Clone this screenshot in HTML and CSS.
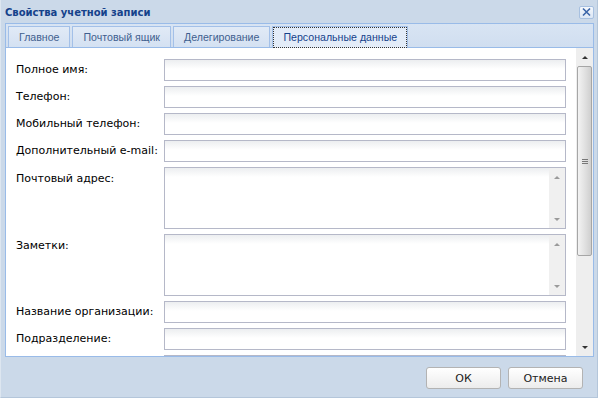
FILE: index.html
```html
<!DOCTYPE html>
<html lang="ru">
<head>
    <meta charset="UTF-8">
    <title>Свойства учетной записи</title>
    <link rel="stylesheet" href="styles.css">
</head>
<body>
    <div class="window">
        <div class="titlebar">
            <span class="title">Свойства учетной записи</span>
            <span class="close">
                <svg width="13" height="12" viewBox="0 0 13 12">
                    <path d="M3 2.5l7 7M10 2.5l-7 7" stroke="#3a64a8" stroke-width="1.6" fill="none"/>
                </svg>
            </span>
        </div>

        <div class="tabstrip">
            <div class="tab">Главное</div>
            <div class="tab">Почтовый ящик</div>
            <div class="tab">Делегирование</div>
            <div class="tab active"><span>Персональные данные</span></div>
        </div>

        <div class="panel">
            <div class="form">
                <label>Полное имя:</label>
                <div class="field"></div>
                <label>Телефон:</label>
                <div class="field"></div>
                <label>Мобильный телефон:</label>
                <div class="field"></div>
                <label>Дополнительный e-mail:</label>
                <div class="field"></div>
                <label class="top">Почтовый адрес:</label>
                <div class="field area">
                    <div class="mini-scroll"><i class="arr up"></i><i class="arr down"></i></div>
                </div>
                <label class="top">Заметки:</label>
                <div class="field area">
                    <div class="mini-scroll"><i class="arr up"></i><i class="arr down"></i></div>
                </div>
                <label>Название организации:</label>
                <div class="field"></div>
                <label>Подразделение:</label>
                <div class="field"></div>
                <span></span>
                <div class="field"></div>
            </div>
            <div class="scrollbar">
                <div class="sb-btn"><i class="arr up dark"></i></div>
                <div class="sb-thumb"><span class="grip"></span></div>
                <div class="sb-track"></div>
                <div class="sb-btn"><i class="arr down dark"></i></div>
            </div>
        </div>

        <div class="footer">
            <button class="btn">ОК</button>
            <button class="btn">Отмена</button>
        </div>
    </div>
</body>
</html>
```

FILE: styles.css
```css
:root {
    --win-bg: #cbd9e9;
    --border: #99bbe8;
    --title: #15428b;
    --field-border: #b5b8c8;
}

* {
    margin: 0;
    padding: 0;
    box-sizing: border-box;
}

body {
    font-family: 'DejaVu Sans', Verdana, sans-serif;
    font-size: 11px;
    background: var(--win-bg);
}

.window {
    width: 598px;
    height: 398px;
    background: var(--win-bg);
    border-left: 1px solid #dde6f0;
    border-right: 1px solid #b4c6da;
    border-bottom: 1px solid #b4c6da;
    padding: 0 3px 0 4px;
    display: flex;
    flex-direction: column;
}

.titlebar {
    height: 23px;
    display: flex;
    align-items: center;
    justify-content: space-between;
}

.title {
    font-weight: bold;
    font-size: 10px;
    color: var(--title);
    padding-top: 1px;
}

.close {
    width: 15px;
    height: 13px;
    margin-top: 1px;
    border: 1px solid #a7c0e0;
    background: linear-gradient(#f4f8fd, #dbe6f4);
    border-radius: 2px;
    display: flex;
    align-items: center;
    justify-content: center;
}

.tabstrip {
    height: 25px;
    border: 1px solid var(--border);
    background: linear-gradient(#d8e4f3, #d0def0);
    padding: 2px 2px 0;
    display: flex;
    align-items: flex-end;
    gap: 2px;
}

.tab {
    height: 21px;
    padding: 0 10px;
    border: 1px solid #a3c0e8;
    border-bottom: none;
    background: linear-gradient(#e1eaf6, #d4e1f2);
    color: #3f5f8f;
    font-family: 'Liberation Sans', Arial, sans-serif;
    font-size: 10.6px;
    line-height: 20px;
    white-space: nowrap;
}

.tab.active {
    height: 22px;
    margin-bottom: -1px;
    padding: 0;
    background: #e3ecf8;
    color: var(--title);
}

.tab.active span {
    display: block;
    height: 100%;
    padding: 0 9px;
    border: 1px dotted #333;
    line-height: 19px;
}

.panel {
    height: 309px;
    border: 1px solid var(--border);
    border-top: none;
    background: #fff;
    display: flex;
}

.form {
    flex: 1;
    overflow: hidden;
    padding: 11px 10px 0 10px;
    display: grid;
    grid-template-columns: 148px 1fr;
    grid-auto-rows: min-content;
    row-gap: 5px;
    align-content: start;
}

.form label {
    line-height: 22px;
    color: #000;
    white-space: nowrap;
}

.form label.top {
    line-height: 18px;
    padding-top: 3px;
}

.field {
    height: 22px;
    border: 1px solid var(--field-border);
    background: linear-gradient(#eceef0, #fff 9px);
}

.field.area {
    height: 62px;
    display: flex;
    justify-content: flex-end;
}

.mini-scroll {
    width: 16px;
    background: #f0f0f0;
    display: flex;
    flex-direction: column;
    justify-content: space-between;
    align-items: center;
    padding: 8px 0 7px;
}

.arr {
    width: 0;
    height: 0;
    border-left: 3px solid transparent;
    border-right: 3px solid transparent;
}

.arr.up {
    border-bottom: 3px solid #9a9a9a;
}

.arr.down {
    border-top: 3px solid #9a9a9a;
}

.arr.up.dark {
    border-bottom-color: #333;
}

.arr.down.dark {
    border-top-color: #333;
}

.scrollbar {
    width: 17px;
    background: #eeeeee;
    display: flex;
    flex-direction: column;
    align-items: center;
}

.sb-btn {
    height: 18px;
    width: 100%;
    display: flex;
    align-items: center;
    justify-content: center;
}

.sb-thumb {
    width: 15px;
    height: 190px;
    border: 1px solid #a6a6a6;
    border-radius: 2px;
    background: linear-gradient(90deg, #f3f3f3, #dedede 60%, #cfcfcf);
    display: flex;
    align-items: center;
    justify-content: center;
}

.grip {
    width: 6px;
    height: 5px;
    border-top: 1px solid #777;
    border-bottom: 1px solid #777;
    position: relative;
}

.grip::after {
    content: "";
    position: absolute;
    left: 0;
    right: 0;
    top: 1px;
    border-top: 1px solid #777;
}

.sb-track {
    flex: 1;
}

.footer {
    flex: 1;
    display: flex;
    justify-content: flex-end;
    align-items: flex-start;
    gap: 7px;
    padding: 10px 11px 0 0;
}

.btn {
    width: 75px;
    height: 22px;
    border: 1px solid #b3b3b3;
    border-radius: 3px;
    background: linear-gradient(#ffffff, #ececec);
    font-family: inherit;
    font-size: 11px;
    color: #222;
}
```
